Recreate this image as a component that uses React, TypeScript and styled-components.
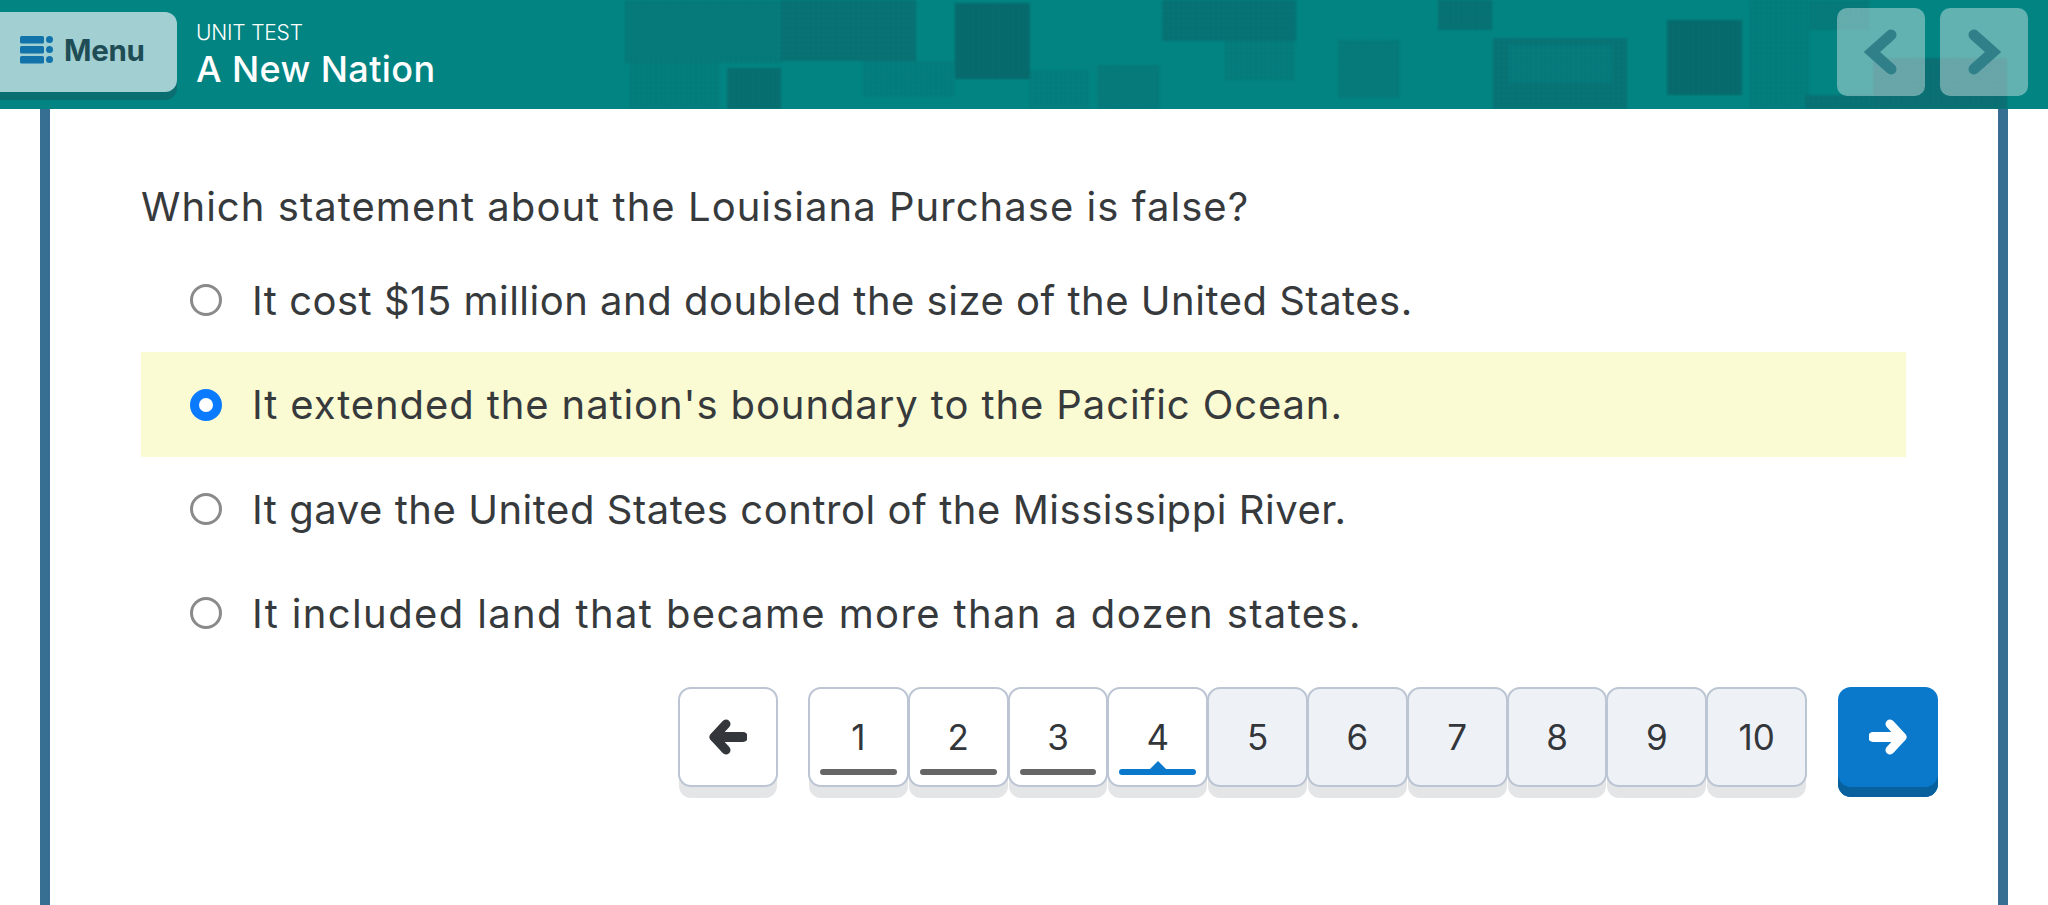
import React from "react";
import styled, { createGlobalStyle } from "styled-components";

const GlobalStyle = createGlobalStyle`
  html, body {
    margin: 0;
    padding: 0;
    background: #ffffff;
    overflow: hidden;
  }
  body {
    font-family: "Inter", "Liberation Sans", sans-serif;
    color: #373a3c;
  }
`;

const Page = styled.div`
  width: 2048px;
  height: 905px;
  display: flex;
  flex-direction: column;
`;

const Header = styled.header`
  position: relative;
  height: 109px;
  flex: none;
  display: flex;
  align-items: flex-start;
  background: #028482;
  overflow: hidden;
`;

const HeaderTexture = styled.svg`
  position: absolute;
  left: 0;
  top: 0;
  width: 100%;
  height: 100%;
  filter: blur(0.8px);
`;

const MenuButton = styled.button`
  position: relative;
  width: 177px;
  height: 80px;
  margin-top: 12px;
  padding: 0 0 5px 20px;
  display: flex;
  align-items: center;
  gap: 11px;
  border: 0;
  border-radius: 0 12px 12px 0;
  background: #a2cfd1;
  box-shadow: 0 8px 0 #0b6e70;
  color: #1f4d56;
  font: 700 29.5px "Inter", sans-serif;
  letter-spacing: -0.3px;
`;

const HeaderTitle = styled.div`
  position: relative;
  margin: 20px 0 0 19px;
  color: #ffffff;
`;

const Eyebrow = styled.div`
  font-size: 21px;
  line-height: 26px;
  font-weight: 300;
  letter-spacing: -0.2px;
`;

const UnitName = styled.div`
  font-size: 36px;
  line-height: 46px;
  font-weight: 500;
  letter-spacing: 0.4px;
`;

const HeaderNav = styled.div`
  position: relative;
  margin: 8px 0 0 auto;
  padding-right: 20px;
  display: flex;
  gap: 15px;
`;

const ArrowTile = styled.div`
  width: 88px;
  height: 88px;
  display: flex;
  align-items: center;
  justify-content: center;
  border-radius: 10px;
  background: rgba(255, 255, 255, 0.38);
`;

const Sheet = styled.main`
  flex: 1;
  margin: 0 40px;
  padding: 70px 91px 0 91px;
  border-left: 10px solid #366f91;
  border-right: 10px solid #366f91;
  background: #ffffff;
`;

const Question = styled.h1`
  margin: 0 0 13px;
  font-size: 40px;
  line-height: 56px;
  font-weight: 400;
  letter-spacing: 1.04px;
  color: #373a3c;
`;

const Choice = styled.label<{ $selected?: boolean; $tracking: number }>`
  display: flex;
  align-items: center;
  gap: 30px;
  height: ${(p) => (p.$selected ? 105 : 104)}px;
  width: 1765px;
  padding-left: 49px;
  box-sizing: border-box;
  background: ${(p) => (p.$selected ? "#fbfbd3" : "transparent")};
  font-size: 40px;
  letter-spacing: ${(p) => p.$tracking}px;
  color: #373a3c;
`;

const Radio = styled.span<{ $selected?: boolean }>`
  width: 32px;
  height: 32px;
  flex: none;
  box-sizing: border-box;
  border-radius: 50%;
  background: #ffffff;
  border: ${(p) => (p.$selected ? "9px solid #0a7bff" : "3px solid #8a8a8a")};
`;

const Pager = styled.nav`
  width: 1797px;
  margin-top: 22px;
  display: flex;
  justify-content: flex-end;
  align-items: flex-start;
`;

const Tile = styled.div<{ $done?: boolean }>`
  position: relative;
  width: 96px;
  height: 96px;
  margin-bottom: 12px;
  display: flex;
  align-items: center;
  justify-content: center;
  border: 2px solid #bcc5d3;
  border-radius: 13px;
  background: ${(p) => (p.$done ? "#ffffff" : "#eef1f5")};
  box-shadow: 0 12px 0 -1px #e4e5e7;
  font-size: 35px;
  font-weight: 400;
  color: #33363a;
`;

const PageTile = styled(Tile)`
  width: 96.8px;
  margin-left: -1px;
`;

const BackTile = styled(Tile)`
  margin-right: 31px;
  background: #ffffff;
`;

const NextTile = styled.div`
  width: 100px;
  height: 110px;
  margin-left: 31px;
  display: flex;
  align-items: center;
  justify-content: center;
  padding-bottom: 10px;
  box-sizing: border-box;
  border-radius: 13px;
  background: #0a78cb;
  box-shadow: inset 0 -10px 0 #08609c;
`;

const Progress = styled.span<{ $current?: boolean }>`
  position: absolute;
  left: 10px;
  right: 10px;
  bottom: 10px;
  height: 6px;
  border-radius: 3px;
  background: ${(p) => (p.$current ? "#0a78cb" : "#666666")};
  ${(p) =>
    p.$current &&
    `&::before {
      content: "";
      position: absolute;
      left: 50%;
      top: -8px;
      margin-left: -8px;
      border-left: 8px solid transparent;
      border-right: 8px solid transparent;
      border-bottom: 8px solid #0a78cb;
    }`}
`;

// the woven squares behind the header: x, y, w, h, fill
const patches: [number, number, number, number, string][] = [
  [625, 0, 156, 63, "#067c7d"],
  [630, 63, 90, 46, "#037f7f"],
  [781, 0, 135, 61, "#087375"],
  [727, 68, 54, 41, "#087072"],
  [862, 61, 93, 36, "#047f80"],
  [955, 3, 75, 76, "#076c6e"],
  [1030, 70, 60, 39, "#048081"],
  [1097, 65, 63, 44, "#067c7d"],
  [1162, 0, 134, 41, "#077476"],
  [1225, 41, 70, 39, "#057e7f"],
  [1338, 40, 62, 58, "#067c7d"],
  [1438, 0, 54, 30, "#077375"],
  [1493, 38, 134, 71, "#087577"],
  [1509, 45, 103, 38, "#067c7e"],
  [1667, 20, 75, 75, "#076c6e"],
  [1750, 0, 60, 109, "#037f7f"],
  [1810, 0, 60, 30, "#067c7d"],
  [1805, 95, 68, 14, "#087375"],
  [1873, 58, 134, 51, "#0b7175"],
];

const menuDots = [0, 1, 2];
const pages = [1, 2, 3, 4, 5, 6, 7, 8, 9, 10];
const choices = [
  { text: "It cost $15 million and doubled the size of the United States.", tracking: 0.5 },
  { text: "It extended the nation's boundary to the Pacific Ocean.", tracking: 0.9 },
  { text: "It gave the United States control of the Mississippi River.", tracking: 0.54 },
  { text: "It included land that became more than a dozen states.", tracking: 1.37 },
];

function MenuIcon() {
  return (
    <svg width="33" height="28" viewBox="0 0 33 28" fill="#1273ab">
      {menuDots.map((i) => (
        <React.Fragment key={i}>
          <rect x="0" y={i * 10} width="24" height="7.5" rx="1.5" />
          <circle cx="29.5" cy={i * 10 + 3.5} r="3.5" />
        </React.Fragment>
      ))}
    </svg>
  );
}

function Chevron({ flip }: { flip?: boolean }) {
  return (
    <svg width="34" height="46" viewBox="0 0 34 46" style={flip ? { transform: "scaleX(-1)" } : undefined}>
      <path d="M27 6 L8 23 L27 40" fill="none" stroke="#30808a" strokeWidth="11" strokeLinecap="round" strokeLinejoin="miter" />
    </svg>
  );
}

function Arrow({ color, flip }: { color: string; flip?: boolean }) {
  return (
    <svg width="38" height="36" viewBox="0 0 38 36" style={flip ? { transform: "scaleX(-1)" } : undefined}>
      <path d="M17 5 L5 18 L17 31" fill="none" stroke={color} strokeWidth="9" strokeLinecap="round" strokeLinejoin="round" />
      <path d="M6 18 H34" fill="none" stroke={color} strokeWidth="10" strokeLinecap="round" />
    </svg>
  );
}

export default function App() {
  return (
    <Page>
      <GlobalStyle />
      <Header>
        <HeaderTexture viewBox="0 0 2048 109" preserveAspectRatio="none">
          <defs>
            <pattern id="weave" width="5" height="5" patternUnits="userSpaceOnUse">
              <path d="M1 0 V5" stroke="#003c40" strokeOpacity="0.1" strokeWidth="1.5" />
              <path d="M0 3 H5" stroke="#003c40" strokeOpacity="0.05" strokeWidth="1" />
            </pattern>
          </defs>
          {patches.map(([x, y, w, h, fill]) => (
            <React.Fragment key={`${x}-${y}`}>
              <rect x={x} y={y} width={w} height={h} fill={fill} />
              <rect x={x} y={y} width={w} height={h} fill="url(#weave)" />
            </React.Fragment>
          ))}
        </HeaderTexture>
        <MenuButton>
          <MenuIcon />
          Menu
        </MenuButton>
        <HeaderTitle>
          <Eyebrow>UNIT TEST</Eyebrow>
          <UnitName>A New Nation</UnitName>
        </HeaderTitle>
        <HeaderNav>
          <ArrowTile>
            <Chevron />
          </ArrowTile>
          <ArrowTile>
            <Chevron flip />
          </ArrowTile>
        </HeaderNav>
      </Header>
      <Sheet>
        <Question>Which statement about the Louisiana Purchase is false?</Question>
        {choices.map((choice, i) => (
          <Choice key={choice.text} $selected={i === 1} $tracking={choice.tracking}>
            <Radio $selected={i === 1} />
            {choice.text}
          </Choice>
        ))}
        <Pager>
          <BackTile>
            <Arrow color="#33363a" />
          </BackTile>
          {pages.map((n) => (
            <PageTile key={n} $done={n <= 4}>
              {n}
              {n <= 4 && <Progress $current={n === 4} />}
            </PageTile>
          ))}
          <NextTile>
            <Arrow color="#ffffff" flip />
          </NextTile>
        </Pager>
      </Sheet>
    </Page>
  );
}
